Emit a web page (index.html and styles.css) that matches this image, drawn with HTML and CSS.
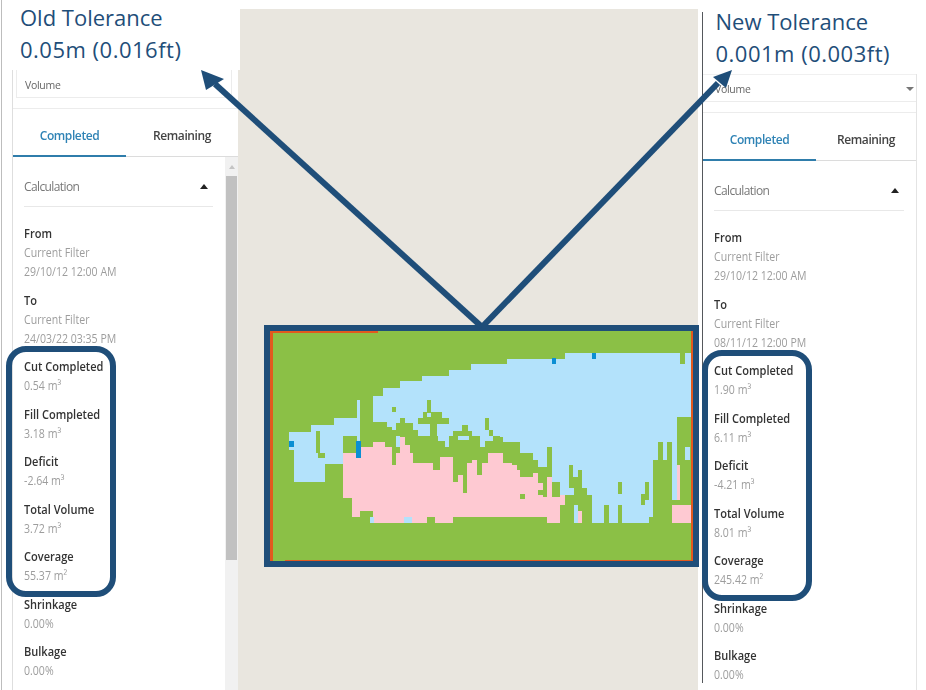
FILE: index.html
```html
<!DOCTYPE html>
<html lang="en">
<head>
<meta charset="utf-8">
<title>Tolerance comparison</title>
<link rel="stylesheet" href="styles.css">
</head>
<body>
<main class="slide">
  <section class="side side-old">
    <h2 class="note note-old">Old Tolerance<br><span class="note-value">0.05m (0.016ft)</span></h2>
    <div class="panel">
      <div class="select"><span>Volume</span></div>
      <div class="tabs"><div class="tab active">Completed</div><div class="tab">Remaining</div></div>
      <div class="scrollarea">
        <div class="content">
          <div class="calc"><span>Calculation</span><i class="caret"></i></div>
          <dl class="group"><dt>From</dt><dd>Current Filter</dd><dd>29/10/12 12:00 AM</dd></dl>
          <dl class="group"><dt>To</dt><dd>Current Filter</dd><dd>24/03/22 03:35 PM</dd></dl>
          <dl class="group"><dt>Cut Completed</dt><dd>0.54 m³</dd></dl>
          <dl class="group"><dt>Fill Completed</dt><dd>3.18 m³</dd></dl>
          <dl class="group"><dt>Deficit</dt><dd>-2.64 m³</dd></dl>
          <dl class="group"><dt>Total Volume</dt><dd>3.72 m³</dd></dl>
          <dl class="group"><dt>Coverage</dt><dd>55.37 m²</dd></dl>
          <dl class="group"><dt>Shrinkage</dt><dd>0.00%</dd></dl>
          <dl class="group"><dt>Bulkage</dt><dd>0.00%</dd></dl>
        </div>
        <div class="scrollbar"><i class="scroll-up"></i><div class="thumb"></div></div>
      </div>
    </div>
  </section>

  <section class="center">
    <div class="map-frame">
      <svg class="map" viewBox="270 331 422.5 230" shape-rendering="crispEdges" aria-hidden="true">
        <rect class="g" x="270" y="331" width="423" height="230"/>
        <polygon class="b" points="289,450 289,432 311,432 311,425 334,425 334,418 357,418 357,400 360,400 360,396 383,396 383,388 400,388 400,381 422,381 422,376 449,376 449,370 471,370 471,364 507,364 507,359 565,359 565,353 680,353 680,364 685,364 685,353 691,353 691,523 370,523 370,517 343,517 343,482 294,482 294,450"/>
        <polygon class="g" points="360,396 373,396 373,422 387,422 387,427 392,427 392,430 396,430 396,423 400,423 400,418 405,418 405,423 413,423 413,430 418,430 418,436 438,436 438,441 445,441 445,447 449,447 449,436 453,436 453,431 462,431 462,425 468,425 468,431 472,431 472,436 480,436 480,447 485,447 485,441 493,441 493,436 500,436 500,437 503,437 503,442 520,442 520,453 533,453 533,460 538,460 538,467 547,467 547,447 552,447 552,482 560,482 560,495 565,495 565,530 325,530 325,464 343,464 343,452 356,452 356,443 360,443"/>
        <rect class="g" x="343" y="436" width="14" height="16"/>
        <rect class="g" x="316" y="431" width="4" height="22"/>
        <rect class="g" x="318" y="453" width="7" height="5"/>
        <rect class="g" x="392" y="407" width="4" height="5"/>
        <rect class="g" x="427" y="400" width="4" height="12"/>
        <rect class="g" x="423" y="412" width="19" height="6"/>
        <rect class="g" x="418" y="418" width="31" height="6"/>
        <rect class="g" x="430" y="424" width="7" height="14"/>
        <rect class="b" x="427" y="413" width="4" height="4"/>
        <rect class="g" x="485" y="418" width="4" height="12"/>
        <rect class="g" x="489" y="430" width="4" height="6"/>
        <rect class="b" x="458" y="436" width="11" height="4"/>
        <rect class="b" x="396" y="436" width="4" height="11"/>
        <polygon class="p" points="343,463 343,453 356,453 356,458 361,458 361,447 373,447 373,442 385,442 385,447 395,447 395,453 400,453 400,437 405,437 405,445 410,445 410,453 413,453 413,463 433,463 433,470 440,470 440,457 453,457 453,453 458,453 458,475 465,475 465,463 472,463 472,460 477,460 477,475 482,475 482,463 488,463 488,453 503,453 503,463 512,463 512,465 517,465 517,470 520,470 520,477 533,477 533,473 538,473 538,483 543,483 543,497 547,497 547,477 552,477 552,497 560,497 560,495 565,495 565,505 560,505 560,523 547,523 547,517 453,517 453,523 435,523 435,517 427,517 427,523 374,523 374,517 352,517 352,498 343,498"/>
        <rect class="g" x="360" y="511" width="13" height="8"/>
        <rect class="b" x="370" y="517" width="4" height="6"/>
        <rect class="b" x="404" y="517" width="8" height="6"/>
        <rect class="g" x="392" y="445" width="4" height="20"/>
        <rect class="g" x="434" y="448" width="6" height="22"/>
        <rect class="g" x="453" y="453" width="5" height="29"/>
        <rect class="g" x="463" y="460" width="4" height="33"/>
        <rect class="g" x="520" y="494" width="5" height="5"/>
        <rect class="g" x="538" y="490" width="6" height="5"/>
        <rect class="g" x="270" y="523" width="422" height="38"/>
        <rect class="g" x="569" y="465" width="4" height="23"/>
        <rect class="g" x="578" y="470" width="4" height="18"/>
        <rect class="g" x="573" y="477" width="9" height="11"/>
        <rect class="g" x="574" y="488" width="13" height="7"/>
        <rect class="g" x="565" y="495" width="27" height="28"/>
        <rect class="b" x="574" y="505" width="4" height="18"/>
        <rect class="p" x="578" y="511" width="4" height="12"/>
        <rect class="g" x="604" y="505" width="5" height="18"/>
        <rect class="g" x="618" y="505" width="4" height="18"/>
        <rect class="g" x="618" y="482" width="4" height="12"/>
        <rect class="g" x="645" y="482" width="4" height="18"/>
        <rect class="g" x="641" y="494" width="4" height="11"/>
        <rect class="g" x="649" y="517" width="4" height="6"/>
        <rect class="g" x="653" y="460" width="19" height="63"/>
        <rect class="g" x="658" y="442" width="5" height="18"/>
        <rect class="g" x="667" y="442" width="5" height="18"/>
        <rect class="g" x="672" y="500" width="5" height="5"/>
        <rect class="g" x="677" y="417" width="14" height="90"/>
        <rect class="b" x="685" y="447" width="5" height="13"/>
        <rect class="p" x="677" y="465" width="3" height="35"/>
        <rect class="p" x="672" y="505" width="19" height="18"/>
        <rect class="db" x="289" y="441" width="5" height="6"/>
        <rect class="db" x="356" y="441" width="5" height="17"/>
        <rect class="db" x="552" y="358" width="4" height="6"/>
        <rect class="db" x="592" y="353" width="4" height="6"/>
        <rect class="o" x="270" y="331" width="2.5" height="230"/>
        <rect class="o" x="270" y="331" width="108" height="1.5"/>
        <rect class="o" x="690.5" y="331" width="2" height="230"/>
        <rect class="o" x="285" y="559.5" width="407" height="1.5"/>
      </svg>
    </div>
  </section>

  <section class="side side-new">
    <h2 class="note note-new">New Tolerance<br><span class="note-value">0.001m (0.003ft)</span></h2>
    <div class="panel panel-new">
      <div class="select"><span>Volume</span><i class="caret down"></i></div>
      <div class="tabs"><div class="tab active">Completed</div><div class="tab">Remaining</div></div>
      <div class="scrollarea">
        <div class="content">
          <div class="calc"><span>Calculation</span><i class="caret"></i></div>
          <dl class="group"><dt>From</dt><dd>Current Filter</dd><dd>29/10/12 12:00 AM</dd></dl>
          <dl class="group"><dt>To</dt><dd>Current Filter</dd><dd>08/11/12 12:00 PM</dd></dl>
          <dl class="group"><dt>Cut Completed</dt><dd>1.90 m³</dd></dl>
          <dl class="group"><dt>Fill Completed</dt><dd>6.11 m³</dd></dl>
          <dl class="group"><dt>Deficit</dt><dd>-4.21 m³</dd></dl>
          <dl class="group"><dt>Total Volume</dt><dd>8.01 m³</dd></dl>
          <dl class="group"><dt>Coverage</dt><dd>245.42 m²</dd></dl>
          <dl class="group"><dt>Shrinkage</dt><dd>0.00%</dd></dl>
          <dl class="group"><dt>Bulkage</dt><dd>0.00%</dd></dl>
        </div>
      </div>
    </div>
  </section>

  <div class="outline outline-old"></div>
  <div class="outline outline-new"></div>

  <svg class="arrows" viewBox="0 0 926 690" aria-hidden="true">
    <path class="arrow-line" d="M482 327 L215 84"/>
    <polygon class="arrow-head" points="201,70 224,79 206,90"/>
    <path class="arrow-line" d="M482 327 L718 83"/>
    <polygon class="arrow-head" points="732,70 713,77 726,88"/>
  </svg>
</main>
</body>
</html>
```

FILE: styles.css
```css
* { box-sizing: border-box; }

html, body {
  margin: 0;
  padding: 0;
  background: #fff;
}

.slide {
  position: relative;
  display: flex;
  width: 926px;
  height: 690px;
  overflow: hidden;
  font-family: "Open Sans", "Noto Sans", sans-serif;
  background: #fff;
}

.side-old {
  flex: 0 0 238px;
  min-width: 0;
  padding-left: 12px;
  background: linear-gradient(#bdbdbd, #bdbdbd) 1px 0 / 1px 100% no-repeat;
}

.side-new {
  flex: 0 0 215px;
  min-width: 0;
  height: 671px;
  margin: 12px 0 0 4px;
  border-left: 1.5px solid #55585c;
}

.note {
  margin: 0;
  font-family: "Open Sans", "Noto Sans", sans-serif;
  font-size: 22px;
  font-weight: 400;
  line-height: 31.5px;
  color: #1f4e79;
}

.note-value { letter-spacing: 0.5px; }

.note-old {
  position: relative;
  z-index: 2;
  width: 228px;
  height: 70px;
  padding: 2px 0 0 8px;
  background: #fff;
}

.note-new {
  position: relative;
  top: -6px;
  height: 62px;
  padding-left: 12.5px;
  white-space: nowrap;
}

.panel {
  height: 620px;
  border-left: 1px solid #dedede;
  color: #333;
  filter: blur(0.4px);
}

.panel-new {
  width: 214px;
  border-left: 0;
  border-right: 1px solid #e4e4e4;
}

.select {
  display: flex;
  align-items: center;
  justify-content: space-between;
  height: 28px;
  margin: 0 6px 0 3px;
  padding: 2px 5px 0 8px;
  font-size: 10.5px;
  letter-spacing: -0.3px;
  color: #666;
  border: 1px solid #ececec;
  border-top: 0;
}

.panel-new .select {
  margin: 0;
  padding: 1px 2px 0 12px;
  border: 0;
  border-top: 1px solid #f0f0f0;
  border-bottom: 1px solid #ececec;
}

.tabs {
  display: grid;
  grid-template-columns: 113px 1fr;
  height: 49px;
  margin-top: 10px;
  border-top: 1px solid #ececec;
  border-bottom: 1px solid #dcdcdc;
}

.tab {
  display: flex;
  align-items: center;
  justify-content: center;
  padding-top: 6px;
  font-size: 12px;
  font-weight: 600;
  letter-spacing: -0.4px;
  color: #444;
}

.tab.active {
  color: #2f83b5;
  border-bottom: 2px solid #2f7dab;
  margin-bottom: -1px;
}

.scrollarea {
  display: flex;
  height: 533px;
}

.content {
  flex: 1;
  min-width: 0;
  padding: 0 12px 0 11px;
}

.calc {
  display: flex;
  align-items: center;
  justify-content: space-between;
  height: 50px;
  margin-bottom: 17px;
  padding: 9px 5px 0 0;
  font-size: 12px;
  letter-spacing: -0.6px;
  color: #777;
  border-bottom: 1px solid #e8e8e8;
}

.caret {
  width: 0;
  height: 0;
  border-left: 4px solid transparent;
  border-right: 4px solid transparent;
  border-bottom: 5px solid #222;
}

.caret.down {
  border-bottom: 0;
  border-top: 4px solid #777;
}

.group {
  margin: 0 0 9.5px;
}

.group dt,
.group dd {
  font-size: 12px;
  line-height: 19px;
  white-space: nowrap;
  transform-origin: left center;
}

.group dt {
  font-weight: 600;
  color: #333;
  transform: scaleX(0.92);
}

.group dd {
  margin: 0;
  color: #9d9d9d;
  transform: scaleX(0.88);
}

.scrollbar {
  position: relative;
  flex: 0 0 13px;
  padding: 19px 1px 0;
  background: #f1f1f1;
}

.scroll-up {
  position: absolute;
  top: 8px;
  left: 4px;
  width: 0;
  height: 0;
  border-left: 3px solid transparent;
  border-right: 3px solid transparent;
  border-bottom: 4px solid #c4c4c4;
}

.thumb {
  height: 384px;
  background: #c1c1c1;
}

.center {
  flex: 0 0 460px;
  min-width: 0;
  margin-top: 9px;
  padding: 316px 0 0 26px;
  background: #e9e6df;
}

.map-frame {
  width: 435px;
  height: 242px;
  border: 6px solid #1f4e79;
  border-right-width: 6.5px;
  background: #8bc04a;
}

.map {
  display: block;
  width: 422.5px;
  height: 230px;
}

.g { fill: #8bc046; }
.b { fill: #b3e2fb; }
.p { fill: #fec9d2; }
.db { fill: #0b8fd3; }
.o { fill: #e2591e; }

.outline {
  position: absolute;
  z-index: 3;
  width: 110px;
  height: 251px;
  border: 6px solid #1f4e79;
  border-radius: 20px;
}

.outline-old { left: 6px; top: 346px; }
.outline-new { left: 702px; top: 350px; }

.arrows {
  position: absolute;
  z-index: 4;
  top: 0;
  left: 0;
  width: 926px;
  height: 690px;
  pointer-events: none;
}

.arrow-line {
  fill: none;
  stroke: #1f4e79;
  stroke-width: 6;
}

.arrow-head { fill: #1f4e79; }
```
